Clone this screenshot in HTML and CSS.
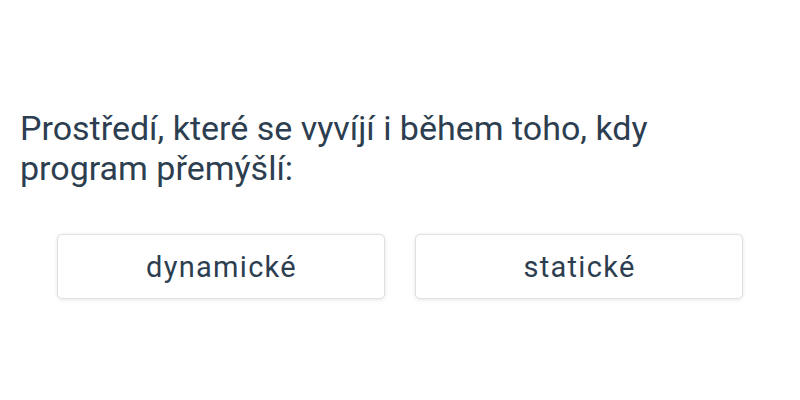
FILE: index.html
```html
<!DOCTYPE html>
<html lang="cs">
<head>
    <meta charset="UTF-8">
    <meta name="viewport" content="width=device-width, initial-scale=1.0">
    <title>Otázka</title>
    <link rel="stylesheet" href="styles.css">
</head>
<body>
    <div class="quiz">
        <p class="question">Prostředí, které se vyvíjí i během toho, kdy program přemýšlí:</p>
        <div class="answers">
            <button type="button" class="answer">dynamické</button>
            <button type="button" class="answer">statické</button>
        </div>
    </div>
</body>
</html>
```

FILE: styles.css
```css
body {
    font-family: Roboto, "Noto Sans", sans-serif;
    background-color: #fff;
    color: #2c3e50;
    margin: 0;
    padding: 0;
}

.quiz {
    padding: 108px 20px 20px;
}

.question {
    margin: 0 0 46px;
    font-size: 34px;
    line-height: 40px;
    max-width: 680px;
}

.answers {
    display: flex;
    justify-content: center;
    gap: 30px;
}

.answer {
    width: 328px;
    height: 65px;
    padding: 0 0 0 1px;
    font-family: inherit;
    font-size: 29px;
    letter-spacing: 1.3px;
    color: #2c3e50;
    background-color: #fff;
    border: 1px solid #e0e0e0;
    border-radius: 5px;
    box-shadow: 0 1px 4px rgba(0, 0, 0, 0.1);
    cursor: pointer;
}
```
